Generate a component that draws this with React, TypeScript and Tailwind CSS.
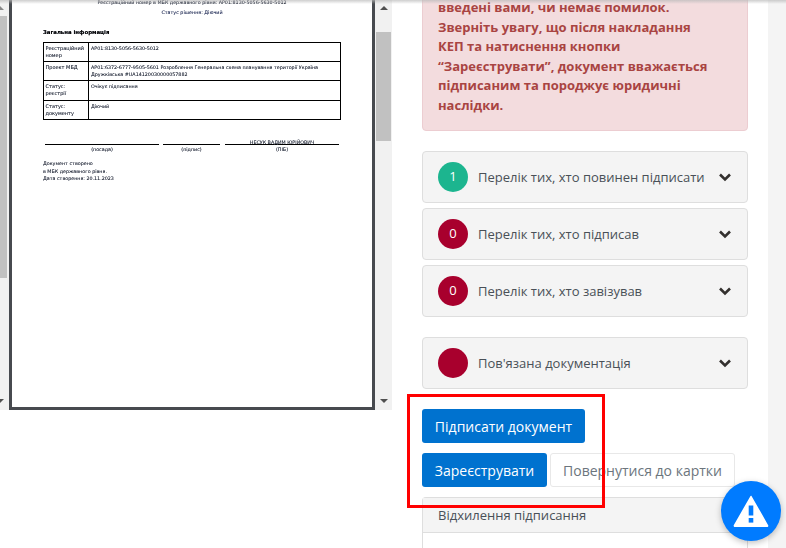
const accordions = [
  { count: "1", title: "Перелік тих, хто повинен підписати", color: "bg-[#1cb58f]" },
  { count: "0", title: "Перелік тих, хто підписав", color: "bg-[#a8002d]" },
  { count: "0", title: "Перелік тих, хто завізував", color: "bg-[#a8002d]" },
];

const infoRows = [
  { label: "Реєстраційний\nномер", value: "АР01:8130-5056-5630-5012", h: "h-[18px]" },
  { label: "Проект МБД", value: "АР01:6372-6777-9505-5601 Розроблення Генеральна схема планування території Україна Дружківська #UA14120030000057882", h: "h-[19px]" },
  { label: "Статус:\nреєстрії", value: "Очікує підписання", h: "h-[20px]" },
  { label: "Статус:\nдокументу", value: "Діючий", h: "h-[19px]" },
];

function Scrollbar({ thumb }: { thumb: string }) {
  return (
    <div className="w-[17px] h-[410px] bg-[#f1f1f1] flex flex-col items-center shrink-0">
      <div className="h-[32px] w-full pt-[6px] flex justify-center">
        <svg width="8" height="4" viewBox="0 0 8 4"><path d="M4 0 8 4H0z" fill="#505050" /></svg>
      </div>
      <div className={`w-[15px] bg-[#c1c1c1] ${thumb}`} />
      <div className="flex-1" />
      <div className="pb-[7px]">
        <svg width="8" height="4" viewBox="0 0 8 4"><path d="M0 0h8L4 4z" fill="#505050" /></svg>
      </div>
    </div>
  );
}

function DocPage() {
  return (
    <div className="w-[366px] h-[410px] border-[3px] border-t-0 border-[#474a4f] bg-white font-['DejaVu_Sans',sans-serif] text-[4.8px] leading-[7.3px] text-[#343a46] overflow-hidden">
      <div className="blur-[0.25px] [text-shadow:0_0_0.4px_#6b7080]">
        <p className="text-center h-[9px] -mt-[1px]">Реєстраційний номер в МБК державного рівня: АР01:8130-5056-5630-5012</p>
        <p className="text-center mt-[1px] text-[#3a4570]">Статус рішення: Діючий</p>
        <div className="pl-[31px] pr-[31px] pt-[13px]">
          <p className="font-bold text-[5.4px] text-black">Загальна інформація</p>
          <div className="mt-[5px] w-[298px] border border-black">
            {infoRows.map((r, i) => (
              <div key={r.label} className={`flex ${r.h} ${i > 0 ? "border-t border-black" : ""}`}>
                <div className="w-[45px] shrink-0 border-r border-black px-[1.5px] pt-[2px] text-[5px] whitespace-pre-line">{r.label}</div>
                <div className="flex-1 px-[2px] pt-[2px]">{r.value}</div>
              </div>
            ))}
          </div>
          <div className="mt-[17px] pl-[2px] flex gap-[4px] text-center">
            <div className="w-[114px]">
              <div className="h-[8px] border-b border-black" />
              <p className="pt-[1px]">(посада)</p>
            </div>
            <div className="w-[57px]">
              <div className="h-[8px] border-b border-black" />
              <p className="pt-[1px]">(підпис)</p>
            </div>
            <div className="w-[114px] ml-[1px]">
              <div className="h-[8px] border-b border-black leading-[11px] whitespace-nowrap">НЕСУК ВАДИМ ЮРІЙОВИЧ</div>
              <p className="pt-[1px]">(ПІБ)</p>
            </div>
          </div>
          <div className="mt-[7.5px]">
            <p>Документ створено</p>
            <p>в МБК державного рівня.</p>
            <p>Дата створення: 20.11.2023</p>
          </div>
        </div>
      </div>
    </div>
  );
}

function Accordion({ count, title, color }: { count: string; title: string; color: string }) {
  return (
    <div className="h-[52px] rounded-[4px] border border-[#dedede] bg-[#f4f4f4] pl-[15px] pr-[15px] flex items-center">
      <div className={`w-[30px] h-[30px] rounded-full flex items-center justify-center text-white text-[13px] ${color}`}>{count}</div>
      <span className="ml-[10px] pt-[2px] flex-1 text-[13px] text-[#495057] whitespace-nowrap">{title}</span>
      <svg width="14" height="10" viewBox="0 0 14 10">
        <path d="M2 2.5 7 7.5 12 2.5" fill="none" stroke="#33302e" strokeWidth="2.6" />
      </svg>
    </div>
  );
}

export default function App() {
  return (
    <div className="relative w-[786px] h-[548px] overflow-hidden bg-white font-['Open_Sans',sans-serif]">
      <div className="flex">
        {/* Left: PDF viewer */}
        <div className="w-[392px] shrink-0 flex">
          <div className="w-[9px] h-[410px] bg-[#f1f1f1] flex flex-col shrink-0">
            <div className="h-[16px] pt-[6px]">
              <svg width="4" height="4" viewBox="0 0 4 4"><path d="M0 0 4 4H0z" fill="#888" /></svg>
            </div>
            <div className="w-[7px] h-[262px] bg-[#c1c1c1]" />
            <div className="flex-1" />
            <div className="pb-[7px]">
              <svg width="4" height="4" viewBox="0 0 4 4"><path d="M0 0h4L0 4z" fill="#505050" /></svg>
            </div>
          </div>
          <DocPage />
          <Scrollbar thumb="h-[109px]" />
        </div>

        {/* Right: signing column */}
        <div className="w-[376px] shrink-0 pl-[30px] pr-[20px] -mt-[14px]">
          <div className="rounded-[4px] border border-[#eccdd1] bg-[#f3dcde] pl-[15px] pr-[10px] pt-[11px] pb-[15px] text-[13px] leading-[19.5px] font-bold text-[#a94442]">
            <p>введені вами, чи немає помилок.</p>
            <p>Зверніть увагу, що після накладання</p>
            <p>КЕП та натиснення кнопки</p>
            <p>“Зареєструвати”, документ вважається</p>
            <p>підписаним та породжує юридичні</p>
            <p>наслідки.</p>
          </div>

          <div className="mt-[20px] flex flex-col gap-[5px]">
            {accordions.map((a) => (
              <Accordion key={a.title} {...a} />
            ))}
          </div>

          <div className="mt-[20px]">
            <Accordion count="" title="Пов'язана документація" color="bg-[#a8002d]" />
          </div>

          <div className="mt-[20px]">
            <button className="h-[34px] w-[163px] rounded-[3px] bg-[#0072cf] text-white text-[14px] font-medium">Підписати документ</button>
          </div>
          <div className="mt-[10px] flex gap-[3px]">
            <button className="h-[34px] w-[125px] rounded-[3px] bg-[#0072cf] text-white text-[14px] font-medium">Зареєструвати</button>
            <button className="h-[34px] w-[185px] rounded-[3px] border border-[#e8e8e8] bg-white text-[#6c757d] text-[14px]">Повернутися до картки</button>
          </div>

          <div className="mt-[10px] rounded-t-[4px] border border-b-0 border-[#dedede]">
            <div className="h-[35px] pt-[1px] border-b border-[#dedede] bg-[#f4f4f4] pl-[15px] flex items-center text-[13px] text-[#495057]">Відхилення підписання</div>
            <div className="h-[40px] bg-white" />
          </div>
        </div>

        <div className="flex-1 h-[548px] bg-[#f4f4f4]" />
      </div>

      {/* Overlays: top shadow, annotation box, help button */}
      <div className="absolute top-0 left-0 right-0 h-[4px] bg-gradient-to-b from-[#b9b9b9] to-transparent opacity-70" />
      <div className="absolute left-[407px] top-[394px] w-[198px] h-[114px] border-[3px] border-[#ff0000]" />
      <div className="absolute left-[721px] top-[481px] w-[60px] h-[60px] rounded-full bg-[#007bff] shadow-[0_2px_6px_rgba(0,0,0,0.25)] flex items-center justify-center">
        <svg width="36" height="32" viewBox="0 0 36 32">
          <path d="M18 1.5 34.5 30.5a.6.6 0 0 1-.5.9H2a.6.6 0 0 1-.5-.9z" fill="#fff" stroke="#fff" strokeWidth="1.5" strokeLinejoin="round" />
          <rect x="15.7" y="10.5" width="4.6" height="10" fill="#007bff" />
          <rect x="15.7" y="23" width="4.6" height="4.6" fill="#007bff" />
        </svg>
      </div>
    </div>
  );
}
